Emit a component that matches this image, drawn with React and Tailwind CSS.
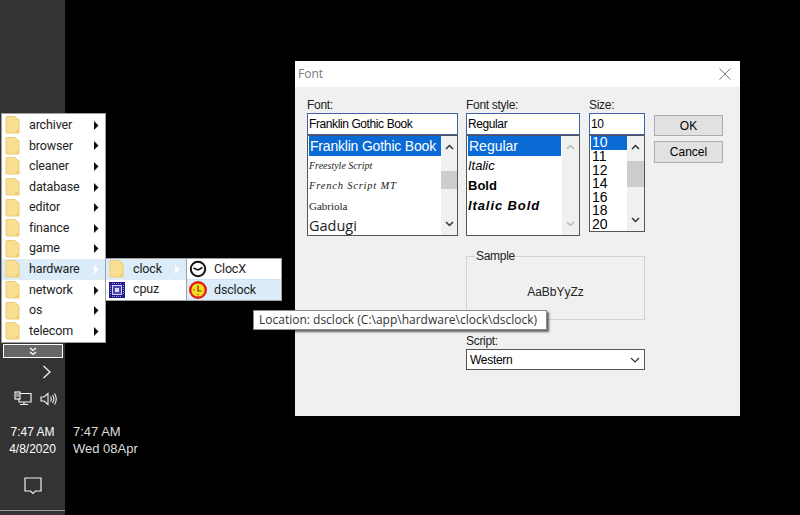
import React from 'react';

const menuFont = { fontFamily: 'Roboto, "Liberation Sans", sans-serif' };
const uiFont = { fontFamily: '"Liberation Sans", sans-serif' };
const titleFont = { fontFamily: '"Open Sans", sans-serif' };

const categories = ['archiver', 'browser', 'cleaner', 'database', 'editor', 'finance', 'game', 'hardware', 'network', 'os', 'telecom'];

const FolderIcon = () => (
  <svg width="15" height="18" viewBox="0 0 15 18" className="shrink-0">
    <path d="M1 1.5 Q1 .5 2 .5 H10 L11.5 2 V3 H13 Q14 3 14 4 V17 H2 Q1 17 1 16 Z" fill="#f9df92" stroke="#ebcb72" />
    <path d="M11 14 H14 V17 H10.5 V14.5 Z" fill="#f2cf70" />
  </svg>
);

const Arrow = ({ light }) => (
  <svg width="6" height="9" viewBox="0 0 6 9" className="shrink-0">
    <path d="M1 0 L5.5 4.5 L1 9 Z" fill={light ? '#ffffff' : '#111111'} />
  </svg>
);

const ClockOutline = () => (
  <svg width="18" height="18" viewBox="0 0 18 18" className="shrink-0">
    <circle cx="9" cy="9" r="7.2" fill="#fff" stroke="#111" strokeWidth="2" />
    <path d="M9 10 L4.5 8 M9 10 L13.5 7.5" stroke="#111" strokeWidth="1.5" fill="none" />
  </svg>
);

const DsClockIcon = () => (
  <svg width="18" height="18" viewBox="0 0 18 18" className="shrink-0">
    <circle cx="9" cy="9" r="7.8" fill="#f7dd22" stroke="#e0201a" strokeWidth="2.4" />
    <path d="M9 4.5 V10 H12.5" stroke="#7a2b10" strokeWidth="1.2" fill="none" />
    <circle cx="5" cy="9" r=".7" fill="#7a2b10" />
    <circle cx="9" cy="13.5" r=".7" fill="#7a2b10" />
  </svg>
);

const CpuIcon = () => (
  <svg width="16" height="16" viewBox="0 0 16 16" className="shrink-0">
    <rect width="16" height="16" fill="#231c8c" />
    <rect x="3.5" y="3.5" width="9" height="9" fill="#4a44b8" stroke="#d4d4f4" />
    <rect x="6" y="6" width="4" height="4" fill="#dcdcf8" />
    <path d="M1.5 3 V13 M14.5 3 V13 M3 1.5 H13 M3 14.5 H13" stroke="#9c9ce0" strokeWidth="1" strokeDasharray="1 1" />
  </svg>
);

const MenuRow = ({ icon, label, arrow, active, className }) => (
  <div className={`flex items-center pr-[6px] ${active ? 'bg-[#dcecf9]' : ''} ${className}`}>
    <div className="w-[21px] flex justify-center shrink-0">{icon}</div>
    <span className="flex-1 text-[12.5px] tracking-[-.15px] text-[#222] truncate pl-[6px]" style={menuFont}>{label}</span>
    {arrow}
  </div>
);

const Taskbar = () => (
  <div className="w-[65px] h-[515px] bg-[#333333] shrink-0 flex flex-col items-center text-white" style={uiFont}>
    <svg width="10" height="14" viewBox="0 0 10 14" className="mt-[365px] ml-[28px]">
      <path d="M1.5 1 L8 7 L1.5 13" stroke="#f2f2f2" strokeWidth="1.3" fill="none" />
    </svg>
    <div className="flex items-center mt-[12px] ml-[6px] gap-[8px]">
      <svg width="18" height="16" viewBox="0 0 18 16">
        <path d="M5 2.5 H17 V11 H5 Z M6 13.5 H14 M10 11 V13.5" stroke="#f2f2f2" strokeWidth="1.2" fill="none" />
        <rect x="1" y="1" width="5" height="7" fill="#333" stroke="#f2f2f2" strokeWidth="1.2" />
        <path d="M2 3 H5 M2 5 H5" stroke="#f2f2f2" strokeWidth="1" />
      </svg>
      <svg width="18" height="14" viewBox="0 0 18 14">
        <path d="M1 5 H4 L8 1.5 V12.5 L4 9 H1 Z" stroke="#f2f2f2" strokeWidth="1.1" fill="none" />
        <path d="M10.5 4.5 Q12 7 10.5 9.5 M12.5 3 Q15 7 12.5 11 M14.5 1.5 Q18 7 14.5 12.5" stroke="#f2f2f2" strokeWidth="1.1" fill="none" />
      </svg>
    </div>
    <div className="mt-[17px] text-[12px] leading-[17px] text-center text-white whitespace-nowrap">
      <div>7:47 AM</div>
      <div>4/8/2020</div>
    </div>
    <svg width="18" height="18" viewBox="0 0 18 18" className="mt-[19px]">
      <path d="M1 1 H17 V14 H11.5 L9 16.5 L6.5 14 H1 Z" stroke="#f2f2f2" strokeWidth="1.2" fill="none" />
    </svg>
    <div className="mt-[15px] h-[1px] w-full bg-[#9a9a9a]" />
  </div>
);

const Scrollbar = ({ thumbTop, thumbHeight, dim, width }) => (
  <div className={`relative h-full bg-[#f0f0f0] shrink-0 flex flex-col justify-between items-center py-[8px] ${width}`}>
    <svg width="9" height="6" viewBox="0 0 9 6"><path d="M1 5 L4.5 1.5 L8 5" stroke={dim ? '#bbbbbb' : '#333333'} strokeWidth="1.5" fill="none" /></svg>
    {thumbHeight > 0 && <div className="absolute left-0 right-0 bg-[#cdcdcd]" style={{ top: thumbTop, height: thumbHeight }} />}
    <svg width="9" height="6" viewBox="0 0 9 6"><path d="M1 1 L4.5 4.5 L8 1" stroke={dim ? '#bbbbbb' : '#333333'} strokeWidth="1.5" fill="none" /></svg>
  </div>
);

const Field = ({ value }) => (
  <div className="h-[22px] border border-[#3f62a8] bg-white flex items-center pl-[1px] text-[12px] text-black tracking-[-.4px]">{value}</div>
);

const FontDialog = () => (
  <div className="absolute left-[295px] top-[61px] w-[445px] h-[355px] bg-[#f0f0f0] flex flex-col" style={uiFont}>
    <div className="h-[26px] bg-white flex items-center justify-between pl-[3px] pr-[9px] text-[12px] text-[#7a7a7a]" style={titleFont}>
      <span>Font</span>
      <svg width="12" height="12" viewBox="0 0 12 12"><path d="M.5 .5 L11.5 11.5 M11.5 .5 L.5 11.5" stroke="#777" strokeWidth="1" /></svg>
    </div>
    <div className="flex pl-[12px] pt-[10px] text-[12px] leading-[16px] text-[#222] tracking-[-.3px]">
      <div className="w-[151px] mr-[8px]">
        <div className="h-[16px]">Font:</div>
        <Field value="Franklin Gothic Book" />
        <div className="h-[101px] border border-[#555] bg-white flex tracking-normal">
          <div className="flex-1 min-w-0 pl-[1px]">
            <div className="h-[20px] bg-[#0a6ad6] text-white text-[14px] leading-[20px] pl-[1px] whitespace-nowrap tracking-[-.2px]">Franklin Gothic Book</div>
            <div className="h-[20px] flex items-center text-[10px] italic whitespace-nowrap" style={{ fontFamily: 'cursive' }}>Freestyle Script</div>
            <div className="h-[20px] flex items-center text-[10.5px] italic whitespace-nowrap tracking-[.8px]" style={{ fontFamily: 'cursive' }}>French Script MT</div>
            <div className="h-[20px] flex items-center text-[11px] whitespace-nowrap" style={{ fontFamily: '"Liberation Serif", serif' }}>Gabriola</div>
            <div className="h-[20px] flex items-center text-[14.5px] whitespace-nowrap" style={titleFont}>Gadugi</div>
          </div>
          <Scrollbar width="w-[16px]" thumbTop={35} thumbHeight={18} />
        </div>
      </div>
      <div className="w-[114px] mr-[9px]">
        <div className="h-[16px]">Font style:</div>
        <Field value="Regular" />
        <div className="h-[101px] border border-[#555] bg-white flex tracking-normal">
          <div className="flex-1 min-w-0 pl-[1px] text-[13px] text-black">
            <div className="h-[20px] w-[93px] bg-[#0a6ad6] text-white leading-[20px] pl-[1px] text-[14px]">Regular</div>
            <div className="h-[20px] leading-[20px] italic">Italic</div>
            <div className="h-[20px] leading-[20px] font-bold">Bold</div>
            <div className="h-[20px] leading-[20px] font-bold italic tracking-[.9px]">Italic Bold</div>
          </div>
          <Scrollbar dim width="w-[17px]" thumbHeight={0} />
        </div>
      </div>
      <div className="w-[56px] mr-[9px]">
        <div className="h-[16px]">Size:</div>
        <Field value="10" />
        <div className="h-[97px] border border-[#555] bg-white flex text-[14px] leading-[13.5px] text-black tracking-normal">
          <div className="flex-1 min-w-0 pl-[1px]">
            <div className="bg-[#0a6ad6] text-white h-[14px] pl-[1px]">10</div>
            {['11', '12', '14', '16', '18', '20'].map((size) => (
              <div key={size} className="h-[13.5px] pl-[1px]">{size}</div>
            ))}
          </div>
          <Scrollbar width="w-[17px]" thumbTop={25} thumbHeight={26} />
        </div>
      </div>
      <div className="w-[69px] pt-[18px] flex flex-col gap-[5px] text-black text-[12px] tracking-normal">
        <button type="button" className="h-[21px] bg-[#e1e1e1] border border-[#adadad]">OK</button>
        <button type="button" className="h-[22px] bg-[#e1e1e1] border border-[#adadad]">Cancel</button>
      </div>
    </div>
    <div className="ml-[171px] w-[179px] mt-[20px] text-[12px] text-[#222]">
      <div className="relative h-[64px] border border-[#d2d2d2] flex items-center justify-center pt-[8px] text-[12px] text-[#222]">
        <span className="absolute left-[8px] -top-[9px] bg-[#f0f0f0] px-[1px] leading-[16px] tracking-[-.3px]">Sample</span>
        AaBbYyZz
      </div>
      <div className="mt-[13px] leading-[16px] tracking-[-.3px]">Script:</div>
      <div className="h-[21px] bg-white border border-[#555] flex items-center justify-between pl-[3px] pr-[4px] text-black">
        <span className="tracking-[-.3px]">Western</span>
        <svg width="10" height="6" viewBox="0 0 10 6"><path d="M1 1 L5 5 L9 1" stroke="#333" strokeWidth="1.2" fill="none" /></svg>
      </div>
    </div>
  </div>
);

const Menus = () => (
  <>
    <div className="absolute left-[1px] top-[113px] w-[105px] h-[230px] bg-white border border-[#a0a0a0] flex flex-col pt-[1px]">
      {categories.map((name) => (
        <MenuRow
          key={name}
          className="h-[20.6px]"
          icon={<FolderIcon />}
          label={name}
          active={name === 'hardware'}
          arrow={<Arrow light={name === 'hardware'} />}
        />
      ))}
    </div>
    <button type="button" className="absolute left-[3px] top-[344px] w-[60px] h-[14px] bg-[#666] border border-white flex items-center justify-center">
      <svg width="8" height="9" viewBox="0 0 8 9"><path d="M1 1 L4 3.5 L7 1 M1 5 L4 7.5 L7 5" stroke="#fff" strokeWidth="1.3" fill="none" /></svg>
    </button>
    <div className="absolute left-[105px] top-[258px] w-[82px] h-[43px] bg-white border border-[#a0a0a0] flex flex-col">
      <MenuRow className="h-[21px]" icon={<FolderIcon />} label="clock" active arrow={<Arrow light />} />
      <MenuRow className="h-[21px]" icon={<CpuIcon />} label="cpuz" />
    </div>
    <div className="absolute left-[186px] top-[258px] w-[96px] h-[43px] bg-white border border-[#a0a0a0] flex flex-col">
      <MenuRow className="h-[21px]" icon={<ClockOutline />} label="ClocX" />
      <MenuRow className="h-[21px] border-t border-[#cfe3f5]" icon={<DsClockIcon />} label="dsclock" active />
    </div>
    <div className="absolute left-[253px] top-[310px] w-[294px] h-[20px] bg-white border border-[#8a8a8a] shadow-[2px_2px_2px_rgba(0,0,0,.6)] flex items-center pl-[5px] text-[12px] text-[#333] whitespace-nowrap" style={titleFont}>
      Location: dsclock (C:\app\hardware\clock\dsclock)
    </div>
  </>
);

export default function App() {
  return (
    <div className="relative w-[800px] h-[515px] bg-black overflow-hidden flex items-start">
      <Taskbar />
      <div className="mt-[424px] ml-[8px] text-[13px] leading-[16.5px] text-[#dddddd]" style={uiFont}>
        <div>7:47 AM</div>
        <div>Wed 08Apr</div>
      </div>
      <FontDialog />
      <Menus />
    </div>
  );
}
